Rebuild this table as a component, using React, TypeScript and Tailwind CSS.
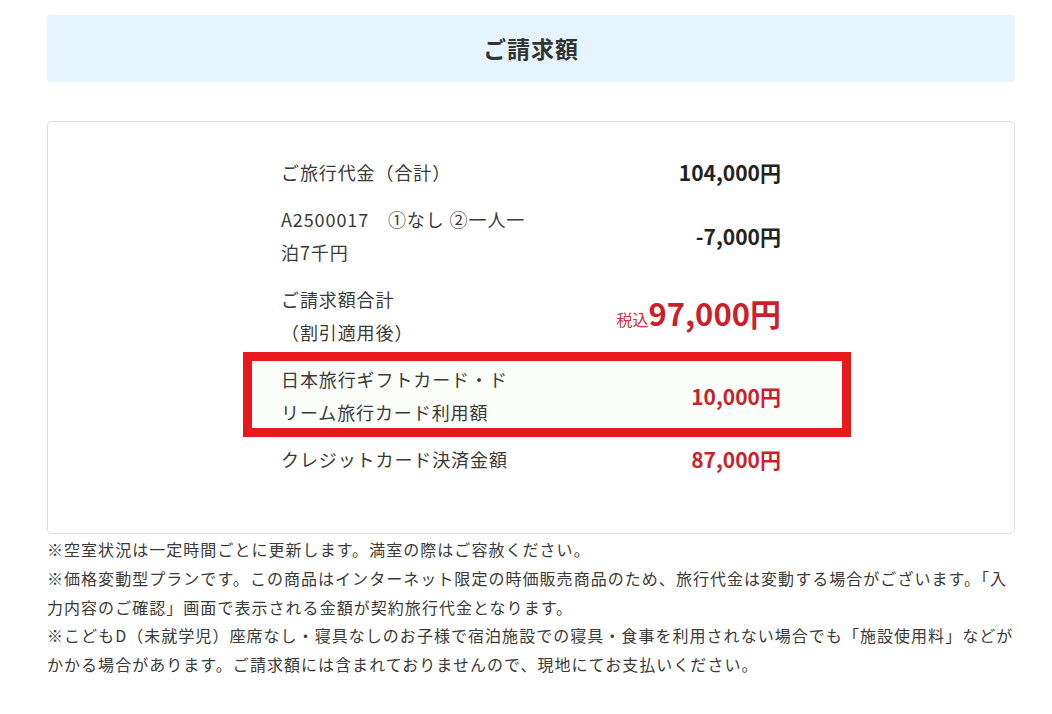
const FONT = "font-['Noto_Sans_CJK_JP','Noto_Sans',sans-serif]";

type Row = {
  label: React.ReactNode;
  amount: React.ReactNode;
  highlight?: boolean;
};

const rows: Row[] = [
  {
    label: "ご旅行代金（合計）",
    amount: <span className="text-[21px] font-bold text-[#222]">104,000円</span>,
  },
  {
    label: (
      <>
        A2500017　①なし ②一人一
        <br />
        泊7千円
      </>
    ),
    amount: <span className="text-[21px] font-bold text-[#222]">-7,000円</span>,
  },
  {
    label: (
      <>
        ご請求額合計
        <br />
        （割引適用後）
      </>
    ),
    amount: (
      <span className="flex items-baseline">
        <span className="text-[16px] text-[#d0303c] tracking-normal">税込</span>
        <span className="text-[31px] font-bold leading-none text-[#cc1f2d] tracking-normal">97,000円</span>
      </span>
    ),
  },
  {
    label: (
      <>
        日本旅行ギフトカード・ド
        <br />
        リーム旅行カード利用額
      </>
    ),
    amount: <span className="text-[21px] font-bold text-[#cc1f2d]">10,000円</span>,
    highlight: true,
  },
  {
    label: "クレジットカード決済金額",
    amount: <span className="text-[21px] font-bold text-[#cc1f2d]">87,000円</span>,
  },
];

export default function App() {
  return (
    <div className={`${FONT} bg-white min-h-[714px] pt-[15px] text-[#333]`}>
      <div className="ml-[47px] w-[968px]">
        <div className="h-[67px] rounded-[4px] bg-[#e6f4fd] flex items-center justify-center">
          <h2 className="text-[23px] font-bold text-[#333] tracking-[0.04em]">ご請求額</h2>
        </div>

        <div className="mt-[39px] border border-[#dedede] rounded-[5px] pt-[27px] pb-[50px] flex justify-center">
          <div className="w-[500px]">
            {rows.map((row, i) => (
              <div key={i} className="relative flex items-center justify-between py-[7px]">
                {row.highlight && (
                  <div className="absolute left-[-38px] right-[-70px] top-[-4px] bottom-[-1px] border-[9px] border-[#e8191c] bg-[#fbfdf9]" />
                )}
                <div className="relative w-[250px] text-[18px] leading-[33px] tracking-[0.05em] text-[#3a3a3a]">
                  {row.label}
                </div>
                <div className="relative flex items-center leading-[33px]">{row.amount}</div>
              </div>
            ))}
          </div>
        </div>

        <div className="text-[16px] leading-[28.75px] tracking-[0.065em] text-[#3a3a3a] pt-[1px]">
          <p>※空室状況は一定時間ごとに更新します。満室の際はご容赦ください。</p>
          <p>
            ※価格変動型プランです。この商品はインターネット限定の時価販売商品のため、旅行代金は変動する場合がございます。「入力内容のご確認」画面で表示される金額が契約旅行代金となります。
          </p>
          <p>
            ※こどもD（未就学児）座席なし・寝具なしのお子様で宿泊施設での寝具・食事を利用されない場合でも「施設使用料」などがかかる場合があります。ご請求額には含まれておりませんので、現地にてお支払いください。
          </p>
        </div>
      </div>
    </div>
  );
}
